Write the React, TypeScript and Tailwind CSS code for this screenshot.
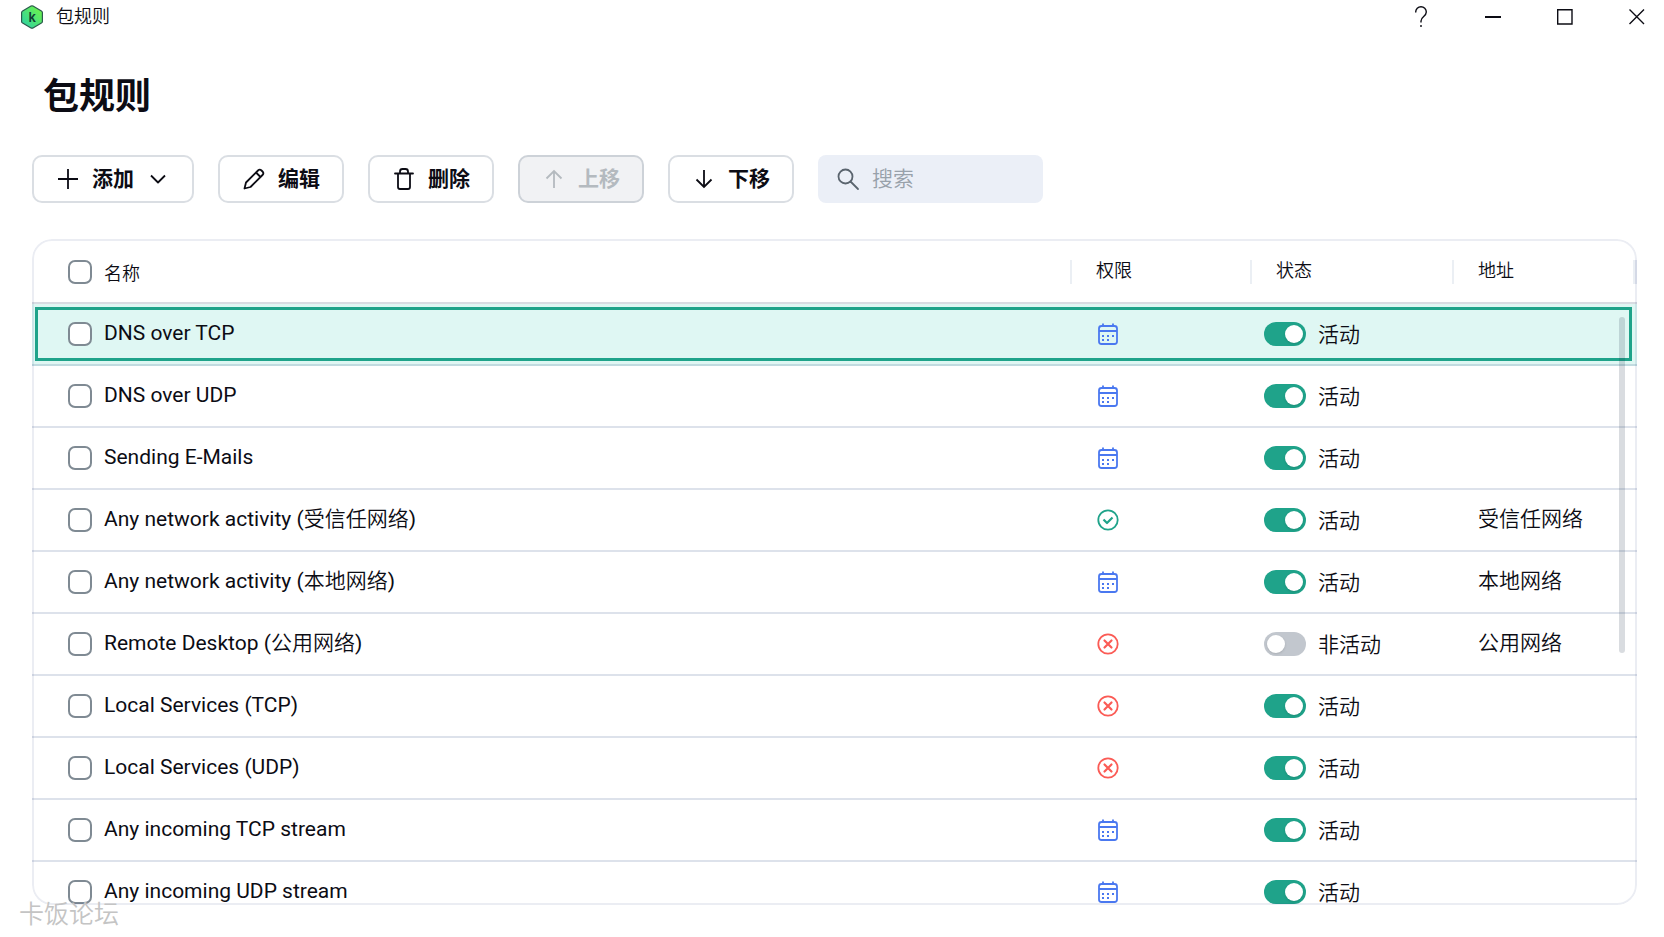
import { useState } from 'react'

type Permission = 'app' | 'allow' | 'block'

interface PacketRule {
  name: string
  permission: Permission
  active: boolean
  address?: string
}

const RULES: PacketRule[] = [
  { name: 'DNS over TCP', permission: 'app', active: true },
  { name: 'DNS over UDP', permission: 'app', active: true },
  { name: 'Sending E-Mails', permission: 'app', active: true },
  { name: 'Any network activity', permission: 'allow', active: true, address: '受信任网络' },
  { name: 'Any network activity', permission: 'app', active: true, address: '本地网络' },
  { name: 'Remote Desktop', permission: 'block', active: false, address: '公用网络' },
  { name: 'Local Services (TCP)', permission: 'block', active: true },
  { name: 'Local Services (UDP)', permission: 'block', active: true },
  { name: 'Any incoming TCP stream', permission: 'app', active: true },
  { name: 'Any incoming UDP stream', permission: 'app', active: true },
]

const CHECKBOX =
  'block size-6 shrink-0 appearance-none rounded-[7px] border-2 border-[#7f8a93] bg-white checked:bg-[#1fa38a]'

const BUTTON =
  'flex h-12 items-center gap-3 rounded-[10px] border-2 px-[22px] text-[21px] font-bold whitespace-nowrap'

const WINDOW_BUTTON = 'flex h-[34px] w-[54px] items-center justify-center'

function Logo() {
  return (
    <svg className="h-6 w-[22px]" viewBox="0 0 22 24" aria-hidden="true">
      <defs>
        <linearGradient id="logo" x1="0" y1="1" x2="1" y2="0">
          <stop offset="0.1" stopColor="#2fd3a0" />
          <stop offset="0.9" stopColor="#6df24a" />
        </linearGradient>
      </defs>
      <path
        d="M10 1.1a2 2 0 0 1 2 0l8.400 4.800a2 2 0 0 1 1 1.700v8.800a2 2 0 0 1-1 1.700L12 22.900a2 2 0 0 1-2 0l-8.400-4.800a2 2 0 0 1-1-1.700V7.600a2 2 0 0 1 1-1.700z"
        fill="url(#logo)"
        stroke="#2b5a4c"
        strokeWidth="1.200"
      />
      <text x="11.200" y="16.800" textAnchor="middle" fontFamily="Inter" fontSize="13" fontWeight="600" fill="#123c33">
        k
      </text>
    </svg>
  )
}

interface GlyphProps {
  children: React.ReactNode
  className?: string
}

function Glyph({ children, className = '' }: GlyphProps) {
  return (
    <svg
      className={`size-6 shrink-0 ${className}`}
      viewBox="0 0 24 24"
      fill="none"
      stroke="currentColor"
      strokeWidth="1.800"
      strokeLinecap="round"
      strokeLinejoin="round"
      aria-hidden="true"
    >
      {children}
    </svg>
  )
}

function PermissionIcon({ permission }: { permission: Permission }) {
  if (permission === 'allow') {
    return (
      <Glyph className="text-[#1fa38a]">
        <circle cx="12" cy="12" r="9.700" />
        <path d="m7.500 11.500 3.500 3.500 5.500-5.500" strokeWidth="2.200" strokeLinecap="butt" />
      </Glyph>
    )
  }
  if (permission === 'block') {
    return (
      <Glyph className="text-[#fb5b55]">
        <circle cx="12" cy="12" r="9.700" />
        <path d="m8.500 8.500 7 7M15.500 8.500l-7 7" strokeWidth="2.200" />
      </Glyph>
    )
  }
  return (
    <Glyph className="text-[#4a78f0]">
      <rect x="3" y="4" width="18" height="18" rx="2.500" />
      <path d="M7 1.500V4M17 1.500V4M3 9h18" strokeLinecap="butt" />
      <path d="M6 14h2M11 14h2M16 14h2M6 18h2M11 18h2" strokeWidth="2" strokeLinecap="butt" />
    </Glyph>
  )
}

function TitleBar() {
  return (
    <header className="flex h-[34px] items-center justify-between pl-[21px]">
      <div className="flex items-center gap-[13px]">
        <Logo />
        <span className="text-lg leading-6 font-[350]">包规则</span>
      </div>
      <div className="flex gap-[18px]">
        <button type="button" aria-label="帮助" className={WINDOW_BUTTON}>
          <svg className="h-[22px] w-3" viewBox="0 0 12 22" fill="none" stroke="currentColor" strokeWidth="1.400">
            <path d="M.7 6.500V6A5.300 5.300 0 0 1 11.300 6c0 4.500-5.300 4.500-5.300 9v1.500M6 19v2" />
          </svg>
        </button>
        <button type="button" aria-label="最小化" className={WINDOW_BUTTON}>
          <span className="h-0.5 w-4 bg-[#0c0c14]" />
        </button>
        <button type="button" aria-label="最大化" className={WINDOW_BUTTON}>
          <svg className="size-4" viewBox="0 0 16 16" fill="none" stroke="currentColor" strokeWidth="1.400">
            <path d="M.7.7h14.300v14.300H.7z" />
          </svg>
        </button>
        <button type="button" aria-label="关闭" className={WINDOW_BUTTON}>
          <svg className="size-4" viewBox="0 0 16 16" fill="none" stroke="currentColor" strokeWidth="1.400">
            <path d="m.5.5 14.500 14.500M15 .5.5 15" />
          </svg>
        </button>
      </div>
    </header>
  )
}

function Toolbar() {
  return (
    <div className="flex flex-wrap gap-6">
      <button type="button" className={`${BUTTON} border-[#dadee3]`}>
        <Glyph>
          <path d="M12 2v20M2 12h20" strokeLinecap="butt" />
        </Glyph>
        <span className="pt-0.5">添加</span>
        <Glyph>
          <path d="m5 8.500 7 7 7-7" strokeLinecap="butt" />
        </Glyph>
      </button>
      <button type="button" className={`${BUTTON} border-[#dadee3]`}>
        <Glyph>
          <path d="M2.500 21.500 4 15.500 16 3.500a2.500 2.500 0 0 1 3.500 0l1 1a2.500 2.500 0 0 1 0 3.500L8.500 20zM14 5.500l4.500 4.500" />
        </Glyph>
        <span className="pt-0.5">编辑</span>
      </button>
      <button type="button" className={`${BUTTON} border-[#dadee3]`}>
        <Glyph>
          <path d="M3 6.500h18M6 6.500V20a2 2 0 0 0 2 2h8a2 2 0 0 0 2-2V6.500M8 6V4.500A2.500 2.500 0 0 1 10.500 2h3A2.500 2.500 0 0 1 16 4.500V6" />
        </Glyph>
        <span className="pt-0.5">删除</span>
      </button>
      <button type="button" disabled className={`${BUTTON} border-[#cdd2d8] bg-[#f1f2f4] text-[#b4babf]`}>
        <Glyph>
          <path d="M12 21V4M4.500 11.500 12 4l7.500 7.500" strokeLinecap="butt" strokeLinejoin="miter" />
        </Glyph>
        <span className="pt-0.5">上移</span>
      </button>
      <button type="button" className={`${BUTTON} border-[#dadee3]`}>
        <Glyph>
          <path d="M12 3v17M4.500 12.500 12 20l7.500-7.500" strokeLinecap="butt" strokeLinejoin="miter" />
        </Glyph>
        <span className="pt-0.5">下移</span>
      </button>
      <label className="flex h-12 w-[225px] items-center gap-3 rounded-lg bg-[#ebeff7] pr-3 pl-[18px]">
        <Glyph className="text-[#5a646e]">
          <circle cx="9.500" cy="9.500" r="7" />
          <path d="m14.500 14.500 7.500 7.500" />
        </Glyph>
        <input
          type="search"
          aria-label="搜索"
          placeholder="搜索"
          className="w-full min-w-0 bg-transparent pt-0.5 text-[21px] font-[350] outline-none placeholder:text-[#98a1aa]"
        />
      </label>
    </div>
  )
}

interface RuleRowProps {
  rule: PacketRule
  selected: boolean
  onToggle: () => void
}

function RuleRow({ rule, selected, onToggle }: RuleRowProps) {
  return (
    <tr className={selected ? 'relative h-[62px] bg-[#dff7f3]' : 'h-[62px]'}>
      <td className="border-b-2 border-[#1c3c78]/15 p-0 pl-9">
        {selected && (
          <span className="pointer-events-none absolute top-[3px] right-[5px] bottom-[5px] left-[3px] border-3 border-[#1fa38a]" />
        )}
        <label className="flex items-center gap-3">
          <input type="checkbox" className={CHECKBOX} />
          <span className="pb-[3px] leading-6">
            {rule.name}
            {rule.address && (
              <>
                {' ('}
                <span className="font-[350]">{rule.address}</span>)
              </>
            )}
          </span>
        </label>
      </td>
      <td className="border-b-2 border-[#1c3c78]/15 p-0 pl-6">
        <PermissionIcon permission={rule.permission} />
      </td>
      <td className="border-b-2 border-[#1c3c78]/15 p-0 pl-3">
        <label className="flex items-center gap-3">
          <input
            type="checkbox"
            role="switch"
            checked={rule.active}
            onChange={onToggle}
            className="flex h-6 w-[42px] shrink-0 appearance-none items-center rounded-full bg-[#c2c7ce] px-[3px] before:size-[18px] before:rounded-full before:bg-white before:shadow-sm checked:justify-end checked:bg-[#1fa38a]"
          />
          <span className="pt-0.5 leading-6 font-[350]">{rule.active ? '活动' : '非活动'}</span>
        </label>
      </td>
      <td className="border-b-2 border-[#1c3c78]/15 p-0 pb-[3px] pl-6 leading-6 font-[350]">{rule.address}</td>
    </tr>
  )
}

export default function App() {
  const [rules, setRules] = useState(RULES)

  const toggleRule = (index: number) => {
    setRules(rules.map((rule, i) => (i === index ? { ...rule, active: !rule.active } : rule)))
  }

  return (
    <div className="relative flex h-screen flex-col bg-white font-[Roboto,'Noto_Sans_CJK_SC',sans-serif] text-[#0c0c14]">
      <TitleBar />
      <main className="flex min-h-0 flex-1 flex-col pr-[27px] pb-8 pl-8">
        <h1 className="mt-[37px] ml-[11px] text-4xl leading-[52px] font-bold">包规则</h1>
        <div className="mt-8">
          <Toolbar />
        </div>

        <div className="relative mt-9 min-h-0 flex-1 overflow-hidden rounded-[20px]">
          <table className="w-full table-fixed border-separate border-spacing-0 text-left text-[21px]">
            <colgroup>
              <col />
              <col className="w-[180px]" />
              <col className="w-[202px]" />
              <col className="w-[183px]" />
            </colgroup>
            <thead className="text-lg">
              <tr className="h-[65px]">
                <th className="border-b-2 border-[#d8dce2] p-0 pt-[3px] pl-9 font-[350]">
                  <div className="flex h-6 items-center border-r-2 border-[#ebeff4]">
                    <label className="flex items-center gap-3">
                      <input type="checkbox" className={CHECKBOX} />
                      <span className="pt-[3px] leading-6">名称</span>
                    </label>
                  </div>
                </th>
                <th className="border-b-2 border-[#d8dce2] p-0 pt-[3px] font-[350]">
                  <div className="flex h-6 items-center border-r-2 border-[#ebeff4] pb-0.5 pl-6">权限</div>
                </th>
                <th className="border-b-2 border-[#d8dce2] p-0 pt-[3px] font-[350]">
                  <div className="flex h-6 items-center border-r-2 border-[#ebeff4] pb-0.5 pl-6">状态</div>
                </th>
                <th className="border-b-2 border-[#d8dce2] p-0 pt-[3px] font-[350]">
                  <div className="flex h-6 gap-px border-r-2 border-[#e6e9f1]">
                    <div className="flex flex-1 items-center border-r-2 border-[#ebeff4] pb-0.5 pl-6">地址</div>
                  </div>
                </th>
              </tr>
            </thead>
            <tbody>
              {rules.map((rule, i) => (
                <RuleRow key={i} rule={rule} selected={i === 0} onToggle={() => toggleRule(i)} />
              ))}
            </tbody>
          </table>
          <div className="pointer-events-none absolute inset-0 rounded-[20px] border-2 border-[#1c3c78]/9" />
          <div className="absolute top-[78px] right-3 h-[336px] w-1.5 rounded-full bg-[#1c3246]/17" />
        </div>
      </main>
      <div className="pointer-events-none absolute bottom-1.5 left-[19px] text-[25px] leading-8 font-[350] text-[#c4c4c4]">
        卡饭论坛
      </div>
    </div>
  )
}
